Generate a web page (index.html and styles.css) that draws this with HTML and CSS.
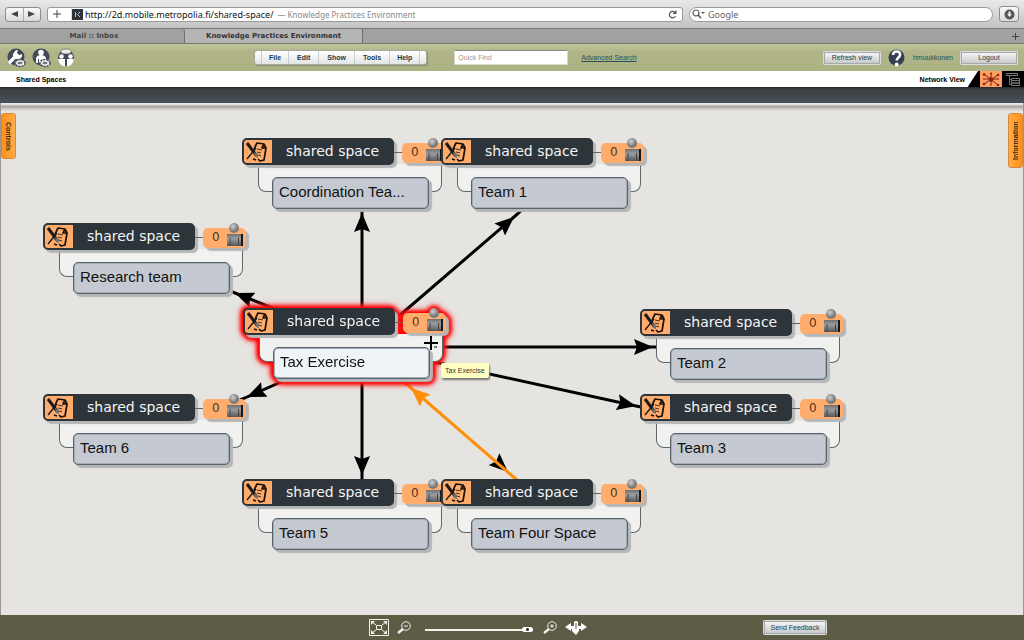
FILE: index.html
```html
<!DOCTYPE html>
<html lang="en">
<head>
<meta charset="utf-8">
<title>Knowledge Practices Environment</title>
<link rel="stylesheet" href="styles.css">
</head>
<body>
<svg class="defs" aria-hidden="true">
  <defs>
    <linearGradient id="body-metal" x1="0" x2="0" y1="0" y2="1"><stop offset="0" stop-color="#6f7073"/><stop offset=".4" stop-color="#9c9da0"/><stop offset="1" stop-color="#55565a"/></linearGradient>
    <radialGradient id="head-metal" cx=".4" cy=".35"><stop offset="0" stop-color="#d0d0d0"/><stop offset="1" stop-color="#77787a"/></radialGradient>
    <marker id="arrow" viewBox="0 0 20 16" refX="19" refY="8" markerWidth="20" markerHeight="16" markerUnits="userSpaceOnUse" orient="auto"><path d="M0 0 19 8 0 16 3 8z"/></marker>
    <marker id="arrow-orange" viewBox="0 0 20 16" refX="19" refY="8" markerWidth="20" markerHeight="16" markerUnits="userSpaceOnUse" orient="auto"><path d="M0 0 19 8 0 16 3 8z" fill="#ff8f0b"/></marker>
    <symbol id="space" viewBox="0 0 26 24">
      <path d="M11 7 13 3 20 4 22 8 20 20 16 21 14 19M20 4 18 8 22 8M11 7 10 10M9 19 12 20" fill="none" stroke="#1a1208" stroke-width="1.700" stroke-linejoin="round"/>
      <path d="M13 9 18 10M13 12 17 13M14 15 17 16" fill="none" stroke="#4a2f1a" stroke-width="1"/>
      <path d="M3 3 12 15" stroke="#1b1b1c" stroke-width="3"/>
      <path d="M3 19 12 8" stroke="#1b1b1c" stroke-width="1.400"/>
      <path d="M10 12 14 14 14 18 11 17z" fill="#77716b"/>
    </symbol>
    <symbol id="person" viewBox="0 0 18 24">
      <path d="M1 11h15v12H1z" fill="url(#body-metal)"/>
      <path d="M4 15v8M12.500 15v8" stroke="#444" stroke-width="1"/>
      <path d="M16 11v12" stroke="#17181a" stroke-width="2"/>
      <circle cx="8" cy="5" r="5" fill="url(#head-metal)"/>
    </symbol>
  </defs>
</svg>

<header class="browser">
  <div class="address-row">
    <div class="nav">
      <button type="button" aria-label="Back"><svg width="7" height="6" viewBox="0 0 7 6"><path d="M0 3 7 0v6z" fill="#444"/></svg></button>
      <button type="button" aria-label="Forward"><svg width="7" height="6" viewBox="0 0 7 6"><path d="M7 3 0 0v6z" fill="#444"/></svg></button>
    </div>
    <div class="address">
      <button type="button" class="add-bookmark" aria-label="Add bookmark"><svg width="8" height="8" viewBox="0 0 8 8"><path d="M4 0v8M0 4h8" stroke="#444"/></svg></button>
      <svg class="site-icon" width="11" height="11" viewBox="0 0 11 11"><path d="M0 0h11v11H0z" fill="#2d3439"/><path d="M3.500 3v5M8 3 5.500 5.500 8 8" stroke="#c5c8ca" fill="none"/></svg>
      <span class="url">http://2d.mobile.metropolia.fi/shared-space/</span>
      <span class="page-name">— Knowledge Practices Environment</span>
      <button type="button" class="reload" aria-label="Reload"><svg width="9" height="9" viewBox="0 0 9 9"><path d="M7 2.500A3.200 3.200 0 1 0 7.500 6" fill="none" stroke="#555" stroke-width="1.200"/><path d="M8.500 0v4h-4z" fill="#555"/></svg></button>
    </div>
    <label class="web-search">
      <svg width="13" height="10" viewBox="0 0 13 10"><circle cx="4" cy="4" r="3" fill="none" stroke="#555" stroke-width="1.200"/><path d="M6 6l3 3" stroke="#555" stroke-width="1.600"/><path d="M9 3h4l-2 2z" fill="#555"/></svg>
      <input type="text" placeholder="Google" aria-label="Google">
    </label>
    <button type="button" class="downloads" aria-label="Downloads"><svg width="11" height="11" viewBox="0 0 11 11"><circle cx="5.500" cy="5.500" r="5" fill="#555"/><path d="M4.500 2.500h2V5H8L5.500 8 3 5h1.500z" fill="#eee"/></svg></button>
  </div>
  <nav class="tabs">
    <button type="button" class="tab">Mail :: Inbox</button>
    <button type="button" class="tab active">Knowledge Practices Environment</button>
    <button type="button" class="tab-add" aria-label="New tab"><svg width="7" height="7" viewBox="0 0 7 7"><path d="M3.500 0v7M0 3.500h7" stroke="#444"/></svg></button>
  </nav>
</header>

<div class="toolbar">
  <div class="tool-icons">
    <button type="button" aria-label="Tools"><svg width="20" height="20" viewBox="0 0 20 20"><circle cx="9" cy="9" r="8.500" fill="#414957"/><path d="M3 14 8 9" stroke="#fff" stroke-width="3.400" stroke-linecap="round"/><path d="M8 3a4 4 0 0 1 3-1l-1 3 2 2 3-1a4 4 0 0 1-5 5 4 4 0 0 1-4-5z" fill="#fff"/><ellipse cx="13" cy="15" rx="5" ry="3.500" fill="#eee" stroke="#414957" stroke-width="1.500" stroke-dasharray="2 1"/><ellipse cx="13" cy="15" rx="2.500" ry="1.200" fill="#777"/></svg></button>
    <button type="button" aria-label="Person"><svg width="20" height="20" viewBox="0 0 20 20"><circle cx="9" cy="9" r="8.500" fill="#414957"/><circle cx="9" cy="4.500" r="2.800" fill="#fff"/><path d="M4 15V10q1-3 5-3t5 3v5z" fill="#fff"/><path d="M6.500 11v4" stroke="#414957"/><ellipse cx="13" cy="15" rx="5" ry="3.500" fill="#eee" stroke="#414957" stroke-width="1.500" stroke-dasharray="2 1"/><ellipse cx="13" cy="15" rx="2.500" ry="1.200" fill="#777"/></svg></button>
    <button type="button" aria-label="Community"><svg width="18" height="20" viewBox="0 0 18 20"><circle cx="9" cy="10" r="8" fill="#414957"/><ellipse cx="9" cy="3.500" rx="5" ry="2.500" fill="#eee" stroke="#666" stroke-width=".7"/><circle cx="4.500" cy="8.500" r="2.300" fill="#fff"/><circle cx="13.500" cy="8.500" r="2.300" fill="#fff"/><path d="M1 11h7v7.500q-6-1-7-7.500zM10 11h7q-1 6.500-7 7.500z" fill="#fff"/></svg></button>
  </div>
  <nav class="menu" aria-label="Main menu">
    <button type="button">File</button><button type="button">Edit</button><button type="button">Show</button><button type="button">Tools</button><button type="button">Help</button>
  </nav>
  <input class="quick-find" type="text" placeholder="Quick Find" aria-label="Quick Find">
  <a class="advanced" href="#">Advanced Search</a>
  <div class="account">
    <button type="button" class="push">Refresh view</button>
    <button type="button" class="help" aria-label="Help"><svg width="17" height="18" viewBox="0 0 17 18"><circle cx="8.500" cy="8.500" r="8" fill="#354052"/><path d="M5 6q0-3.500 3.700-3.500T12 6c0 2.500-3.300 2.500-3.300 5.500" fill="none" stroke="#fff" stroke-width="2.600"/><circle cx="8.700" cy="15.500" r="1.900" fill="#fff"/></svg></button>
    <span class="user">hmuukkonen</span>
    <button type="button" class="push">Logout</button>
  </div>
</div>

<div class="crumbs">
  <span class="crumb">Shared Spaces</span>
  <div class="views">
    <span>Network View</span>
    <svg class="slant" width="13" height="17" viewBox="0 0 13 17"><path d="M0 17 11 0h2v17z"/></svg>
    <button type="button" class="view-on" aria-label="Network view"><svg width="20" height="15" viewBox="0 0 20 15"><path d="M3 2 17 13M17 3 3 12M10 1v13M2 7h16" stroke="#7c210c" stroke-width="1"/><g fill="#8e210b"><circle cx="10" cy="7.500" r="2.300"/><circle cx="3" cy="2.500" r="1.300"/><circle cx="17" cy="3" r="1.300"/><circle cx="3" cy="12" r="1.300"/><circle cx="17" cy="13" r="1.300"/><circle cx="10" cy="1.500" r="1"/></g></svg></button>
    <button type="button" class="view-off" aria-label="Tree view"><svg width="14" height="13" viewBox="0 0 14 13" fill="none" stroke="#777"><path d="M.5.500h11v2H.5zM3.500 3v8.500h2M3.500 6.500h2M5.500 5.500h8v2h-8zM5.500 7.500h8v2.500h-8zM5.500 10h8v2.500h-8z"/></svg></button>
  </div>
</div>
<div class="band"></div>

<main class="canvas">
  <svg class="edges" aria-hidden="true">
    <g transform="translate(-1 -103)" fill="none" stroke="#000" stroke-width="3">
      <path d="M362 345V213v-4" marker-mid="url(#arrow)"/>
      <path d="M399 316 514 217 523 209" marker-mid="url(#arrow)"/>
      <path d="M275 309 235 293 230 291" marker-mid="url(#arrow)"/>
      <path d="M430 347H653h4" marker-mid="url(#arrow)"/>
      <path d="M430 361 636 406 641 407" marker-mid="url(#arrow)"/>
      <path d="M290 378 247 397 240 400" marker-mid="url(#arrow)"/>
      <path d="M362 370V475v5" marker-mid="url(#arrow)"/>
      <path d="M490 457 508 472 509 473" stroke="none" marker-mid="url(#arrow)"/>
      <path d="M517 480 411 388 402 380" stroke="#ff8f0b" marker-mid="url(#arrow-orange)"/>
    </g>
  </svg>

  <article class="node coordination"><div class="frame"></div><div class="head"><span class="kind"><svg width="26" height="24"><use href="#space"/></svg></span><span class="type">shared space</span></div><div class="badge">0<svg class="person" width="18" height="24"><use href="#person"/></svg></div><div class="title">Coordination Tea...</div></article>
  <article class="node team-1"><div class="frame"></div><div class="head"><span class="kind"><svg width="26" height="24"><use href="#space"/></svg></span><span class="type">shared space</span></div><div class="badge">0<svg class="person" width="18" height="24"><use href="#person"/></svg></div><div class="title">Team 1</div></article>
  <article class="node research"><div class="frame"></div><div class="head"><span class="kind"><svg width="26" height="24"><use href="#space"/></svg></span><span class="type">shared space</span></div><div class="badge">0<svg class="person" width="18" height="24"><use href="#person"/></svg></div><div class="title">Research team</div></article>
  <article class="node tax selected"><div class="frame"></div><div class="head"><span class="kind"><svg width="26" height="24"><use href="#space"/></svg></span><span class="type">shared space</span></div><div class="badge">0<svg class="person" width="18" height="24"><use href="#person"/></svg></div><div class="title">Tax Exercise</div></article>
  <article class="node team-2"><div class="frame"></div><div class="head"><span class="kind"><svg width="26" height="24"><use href="#space"/></svg></span><span class="type">shared space</span></div><div class="badge">0<svg class="person" width="18" height="24"><use href="#person"/></svg></div><div class="title">Team 2</div></article>
  <article class="node team-3"><div class="frame"></div><div class="head"><span class="kind"><svg width="26" height="24"><use href="#space"/></svg></span><span class="type">shared space</span></div><div class="badge">0<svg class="person" width="18" height="24"><use href="#person"/></svg></div><div class="title">Team 3</div></article>
  <article class="node team-6"><div class="frame"></div><div class="head"><span class="kind"><svg width="26" height="24"><use href="#space"/></svg></span><span class="type">shared space</span></div><div class="badge">0<svg class="person" width="18" height="24"><use href="#person"/></svg></div><div class="title">Team 6</div></article>
  <article class="node team-5"><div class="frame"></div><div class="head"><span class="kind"><svg width="26" height="24"><use href="#space"/></svg></span><span class="type">shared space</span></div><div class="badge">0<svg class="person" width="18" height="24"><use href="#person"/></svg></div><div class="title">Team 5</div></article>
  <article class="node team-four"><div class="frame"></div><div class="head"><span class="kind"><svg width="26" height="24"><use href="#space"/></svg></span><span class="type">shared space</span></div><div class="badge">0<svg class="person" width="18" height="24"><use href="#person"/></svg></div><div class="title">Team Four Space</div></article>

  <svg class="cursor" width="14" height="14" viewBox="0 0 14 14" aria-hidden="true"><path d="M7 0v14M0 7h14" stroke="#000" stroke-width="2"/><path d="M10 11h3" stroke="#000"/></svg>
  <div class="tooltip" role="tooltip">Tax Exercise</div>
  <button type="button" class="side controls">Controls</button>
  <button type="button" class="side information">Information</button>
</main>

<footer class="bottom">
  <div class="zoom">
    <button type="button" aria-label="Fit to screen"><svg width="20" height="17" viewBox="0 0 20 17" fill="none" stroke="#f1f1ec"><path d="M.5.500h19v16H.5z"/><path d="M7.500 6.500h5v4h-5zM3 3l4 3M17 3l-4 3M3 14l4-3M17 14l-4-3"/><path d="M2 2h4L2 6zM18 2h-4l4 4zM2 15h4l-4-4zM18 15h-4l4-4z" fill="#f1f1ec" stroke="none"/></svg></button>
    <button type="button" aria-label="Zoom out"><svg width="14" height="14" viewBox="0 0 14 14" fill="none" stroke="#f1f1ec"><circle cx="9" cy="5" r="4.300"/><path d="M7 5h4"/><path d="M6 8 1 12" stroke-width="2.500"/></svg></button>
    <input type="range" min="0" max="100" value="100" aria-label="Zoom">
    <button type="button" aria-label="Zoom in"><svg width="14" height="14" viewBox="0 0 14 14" fill="none" stroke="#f1f1ec"><circle cx="9" cy="5" r="4.300"/><path d="M7 5h4M9 3v4"/><path d="M6 8 1 12" stroke-width="2.500"/></svg></button>
    <button type="button" aria-label="Pan"><svg width="22" height="14" viewBox="0 0 22 14"><path d="M0 6 6 2v3h3V1q2-2 4 0v4h3V2l6 4-6 4V8h-2v2l-3 4-4-4V8H6v2z" fill="#fff"/><path d="M11 2v6" stroke="#5d5c45"/></svg></button>
  </div>
  <button type="button" class="push feedback">Send Feedback</button>
</footer>
</body>
</html>
```

FILE: styles.css
```css
* { box-sizing: border-box; }
body {
  margin: 0;
  min-height: 100vh;
  display: flex;
  flex-direction: column;
  font-family: "Liberation Sans", Arial, sans-serif;
  font-size: 7px;
  color: #222;
}
button, input { font: inherit; color: inherit; margin: 0; }
button { background: none; border: 0; padding: 0; display: flex; align-items: center; justify-content: center; }
svg { display: block; flex: none; }
.defs { position: absolute; width: 0; height: 0; }

.browser { font-family: "Noto Sans", "Open Sans", sans-serif; }
.address-row {
  display: flex;
  align-items: center;
  gap: 6px;
  height: 28px;
  padding: 0 5px;
  background: linear-gradient(#e9e9e9, #c3c3c3);
}
.nav { display: flex; height: 15px; width: 36px; border: 1px solid #8d8d8d; border-radius: 3px; background: linear-gradient(#fafafa, #d9d9d9); }
.nav button { flex: 1; }
.nav button + button { border-left: 1px solid #aaa; }
.address {
  flex: 1;
  display: flex;
  align-items: center;
  height: 15px;
  padding: 0 5px;
  background: #fff;
  border: 1px solid #999;
  border-radius: 3px;
  white-space: nowrap;
}
.add-bookmark { width: 19px; height: 13px; justify-content: flex-start; border-right: 1px solid #ddd; }
.site-icon { margin-right: 2px; }
.url { font-size: 9px; color: #111; }
.page-name { font-size: 8px; color: #888; margin-left: 4px; }
.reload { margin-left: auto; }
.web-search {
  display: flex;
  align-items: center;
  gap: 3px;
  flex: 0 0 304px;
  height: 15px;
  padding: 0 2px;
  background: #fff;
  border: 1px solid #999;
  border-radius: 8px;
}
.web-search input { flex: 1; min-width: 0; border: 0; padding: 0; background: none; font-size: 9px; }
.web-search input::placeholder { color: #666; opacity: 1; }
.downloads { width: 20px; height: 16px; border: 1px solid #8d8d8d; border-radius: 3px; background: linear-gradient(#fafafa, #d9d9d9); }
.tabs { display: flex; height: 16px; background: #a1a1a1; border-top: 1px solid #777; border-bottom: 1px solid #777; font-family: "DejaVu Sans", sans-serif; font-weight: bold; }
.tab { flex: 0 0 185px; color: #444; border-right: 1px solid #707070; border-radius: 0 3px 0 0; padding-left: 4px; }
.tab.active { flex-basis: 178px; background: #b5b5b5; color: #333; border-radius: 0; padding: 0; }
.tab-add { margin-left: auto; width: 18px; }

.toolbar { display: flex; align-items: center; height: 27px; padding: 0 7px; background: linear-gradient(#c0c69c, #b0b487 30%, #adb283); }
.tool-icons { display: flex; gap: 5px; width: 247px; }
.menu { display: flex; height: 15px; padding: 0 6px; background: linear-gradient(#fff, #e3e5e5); border: 1px solid #a5a89b; border-radius: 3px; box-shadow: 1px 1px 1px #8b8f70; font-weight: bold; color: #1b3a48; }
.menu button { padding: 0 8px; border-left: 1px solid #c8cccc; }
.menu button:last-child { padding: 0 7px; border-right: 1px solid #c8cccc; }
.menu button:first-child { padding: 0 7px; }
.quick-find { width: 114px; height: 15px; margin-left: 27px; padding: 0 3px; border: 1px solid #d6d8c4; border-top-color: #888; background: #fff; }
.quick-find::placeholder { color: #999; opacity: 1; }
.advanced { margin-left: 13px; color: #24505c; }
.account { margin-left: auto; display: flex; align-items: center; gap: 8px; color: #24505c; }
.push {
  width: 56px;
  height: 12px;
  color: #24404c;
  background: linear-gradient(#f4f4f4, #c9cacb);
  border: 1px solid #a5a8ac;
  box-shadow: 0 0 0 1px #dcdcdc;
  border-radius: 1px;
}

.crumbs { display: flex; align-items: center; height: 16px; padding-left: 16px; background: #fff; font-weight: bold; color: #000; }
.views { margin-left: auto; display: flex; align-items: center; height: 16px; }
.slant { margin-left: 2px; }
.view-on { width: 22px; height: 16px; background: #ff9f63; }
.view-off { width: 22px; height: 16px; background: #000; }
.band { height: 16px; background: linear-gradient(#24282b, #393f43 15%, #495157); }

.canvas {
  position: relative;
  flex: 1;
  min-height: 470px;
  overflow: hidden;
  background: linear-gradient(#eee 0, #dedede 2px, #a49f9f 3px, #c3bfbd 5px, #e5e4e0 8px);
  border-left: 1px solid #99948f;
  border-right: 1px solid #99948f;
}
.edges { position: absolute; inset: 0; width: 100%; height: 100%; }
.node { position: absolute; width: 204px; height: 71px; }
.coordination { left: 241px; top: 35px; }
.team-1 { left: 440px; top: 35px; }
.research { left: 42px; top: 120px; }
.tax { left: 242px; top: 205px; }
.team-2 { left: 639px; top: 206px; }
.team-3 { left: 639px; top: 291px; }
.team-6 { left: 42px; top: 291px; }
.team-5 { left: 241px; top: 376px; }
.team-four { left: 440px; top: 376px; }

.frame { position: absolute; left: 16px; right: 4px; top: 26px; height: 28px; border: 1px solid #5f666c; border-top: 0; border-radius: 0 0 8px 8px; background: #f1f1ef; }
.head {
  position: absolute;
  left: 0;
  top: 0;
  display: flex;
  width: 152px;
  height: 27px;
  background: #2e353a;
  border: 2px solid #2e353a;
  border-radius: 5px;
  box-shadow: 3px 3px 1px #b5b6b7;
}
.head::after { content: ""; position: absolute; left: calc(100% + 2px); top: 12px; width: 9px; height: 1px; background: #5f666c; }
.kind { display: flex; align-items: center; width: 28px; background: #ffac6c; border-radius: 3px 0 0 3px; }
.type { flex: 1; padding-left: 14px; font: 14px/22px "DejaVu Sans", Verdana, sans-serif; color: #f2f4f5; white-space: nowrap; }
.badge {
  position: absolute;
  left: 160px;
  top: 5px;
  width: 43px;
  height: 20px;
  padding-left: 9px;
  background: #ffac6c;
  border-radius: 5px;
  box-shadow: 3px 3px 1px #b5b6b7;
  font: 12px/19px "DejaVu Sans", Verdana, sans-serif;
  color: #4a3928;
}
.person { position: absolute; right: 2px; bottom: 1px; }
.title {
  position: absolute;
  left: 30px;
  top: 39px;
  width: 157px;
  height: 32px;
  padding-left: 6px;
  background: #c5cad2;
  border: 1px solid #59636b;
  border-radius: 5px;
  box-shadow: 3px 3px 1px #b5b6b7, inset 0 0 0 1px #a4abb3;
  font-size: 15px;
  line-height: 28px;
  color: #111;
  white-space: nowrap;
}
.selected { filter: drop-shadow(0 0 1px #f00) drop-shadow(0 0 2px #f00) drop-shadow(0 0 2px #f00) drop-shadow(0 0 2px #f33); }
.selected .title { background: #eff4f6; }

.cursor { position: absolute; left: 423px; top: 233px; }
.tooltip { position: absolute; left: 440px; top: 260px; padding: 3px 4px; line-height: 9px; background: #ffffc4; border-radius: 2px; box-shadow: 1px 2px 2px #777; color: #333; white-space: nowrap; }
.side { position: absolute; top: 10px; width: 15px; writing-mode: vertical-rl; background: linear-gradient(90deg, #ff8f14, #ffac4c); border: 1px solid #d98a38; border-radius: 3px; font-weight: bold; color: #3d2912; }
.controls { left: 0; height: 46px; }
.information { right: 0; height: 55px; transform: rotate(180deg); }

.bottom { position: relative; display: flex; align-items: center; justify-content: center; height: 25px; background: #5d5c45; }
.zoom { display: flex; align-items: center; gap: 8px; padding-right: 68px; }
.zoom input { appearance: none; width: 108px; height: 10px; margin: 4px 2px 0 6px; background: linear-gradient(#f1f1ec, #f1f1ec) center / 100% 2px no-repeat; }
.zoom input::-webkit-slider-thumb { appearance: none; width: 11px; height: 5px; border-radius: 3px; border: 0; background: radial-gradient(circle, #333 1px, #fff 2px); }
.feedback { position: absolute; right: 198px; top: 6px; width: 62px; height: 13px; }
```
